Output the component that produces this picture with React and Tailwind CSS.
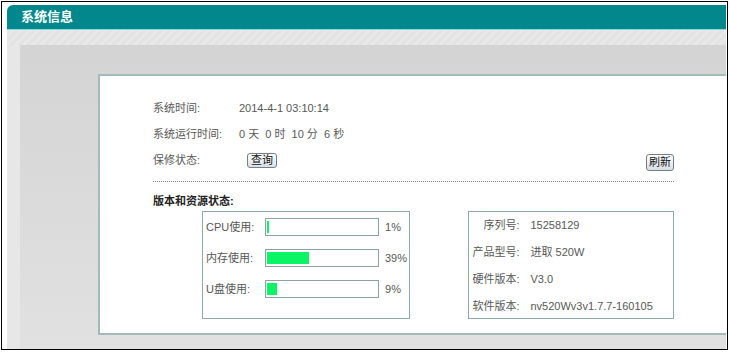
import React from "react";

const font = { fontFamily: '"Liberation Sans", "Noto Sans CJK SC", sans-serif' };

const usage = [
  { label: "CPU使用:", pct: 1 },
  { label: "内存使用:", pct: 39 },
  { label: "U盘使用:", pct: 9 },
];

const info = [
  { label: "序列号:", value: "15258129" },
  { label: "产品型号:", value: "进取 520W" },
  { label: "硬件版本:", value: "V3.0" },
  { label: "软件版本:", value: "nv520Wv3v1.7.7-160105" },
];

function Btn({ children, className = "" }) {
  return (
    <button
      className={`flex items-center justify-center rounded-[3px] border border-[#6f8192] bg-gradient-to-b from-white to-[#d9dee4] text-[11px] leading-none text-[#111] ${className}`}
    >
      {children}
    </button>
  );
}

export default function App() {
  return (
    <div className="w-[730px] h-[352px] bg-white pt-[1px] pl-[1px] overflow-hidden" style={font}>
      <div className="w-[727px] h-[349px] border border-black bg-white flex flex-col pt-[3px] pl-[5px] pr-[1px]">
        {/* header */}
        <div className="h-[24px] shrink-0 rounded-tl-[6px] bg-[#02878d] pl-[14px] flex items-center">
          <span className="text-white font-bold text-[13px]">系统信息</span>
        </div>
        <div className="h-[1px] shrink-0 bg-[#86dada]"></div>

        {/* body */}
        <div className="flex-1 flex flex-col pl-[13px] bg-[#e7e7e7]">
          <div className="h-[15px] shrink-0 bg-[repeating-linear-gradient(135deg,#e3e3e3_0px,#e3e3e3_3px,#e8e8e8_3px,#e8e8e8_6px)] -ml-[13px]"></div>
          <div className="flex-1 pl-[78px] pt-[29px] bg-gradient-to-b from-[#d4d4d4] to-[#e1e1e1]">
            <div className="h-[261px] bg-white border-l-2 border-t-2 border-b-2 border-[#a3baba] pl-[53px] pt-[19px]">
              <div className="w-[521px] text-[11px] text-[#585858]">
                <div className="h-[26px] flex items-center">
                  <span className="w-[86px]">系统时间:</span>
                  <span>2014-4-1 03:10:14</span>
                </div>
                <div className="h-[26px] flex items-center">
                  <span className="w-[86px]">系统运行时间:</span>
                  <span>0 天&nbsp; 0 时&nbsp; 10 分&nbsp; 6 秒</span>
                </div>
                <div className="h-[26px] flex items-center">
                  <span className="w-[86px]">保修状态:</span>
                  <Btn className="ml-[8px] w-[30px] h-[15px]">查询</Btn>
                  <Btn className="ml-auto mt-[5px] w-[28px] h-[17px]">刷新</Btn>
                </div>
                <div className="mt-[8px] border-t border-dotted border-[#8a8a8a]"></div>
                <div className="mt-[11px] h-[16px] flex items-center font-bold text-[#222]">
                  版本和资源状态:
                </div>

                <div className="mt-[2px] flex">
                  <div className="ml-[49px] w-[208px] h-[108px] border border-[#8fa8a8] pl-[3px] pt-[6px]">
                    {usage.map((u, i) => (
                      <div key={u.label} className={`h-[18px] flex items-center ${i > 0 ? "mt-[13px]" : ""}`}>
                        <span className="w-[59px]">{u.label}</span>
                        <div className="w-[114px] h-[18px] border border-[#8aa3a3] px-[1px] py-[2px] flex items-center">
                          <div
                            className="h-[12px] bg-[#0af565]"
                            style={{ width: Math.max(2, Math.round((u.pct / 100) * 108)) }}
                          ></div>
                        </div>
                        <span className="ml-[6px]">{u.pct}%</span>
                      </div>
                    ))}
                  </div>

                  <div className="ml-[58px] w-[207px] h-[108px] border border-[#8fa8a8]">
                    {info.map((r) => (
                      <div key={r.label} className="h-[27px] flex items-center">
                        <span className="w-[51px] text-right">{r.label}</span>
                        <span className="ml-[11px]">{r.value}</span>
                      </div>
                    ))}
                  </div>
                </div>
              </div>
            </div>
          </div>
        </div>
      </div>
    </div>
  );
}
